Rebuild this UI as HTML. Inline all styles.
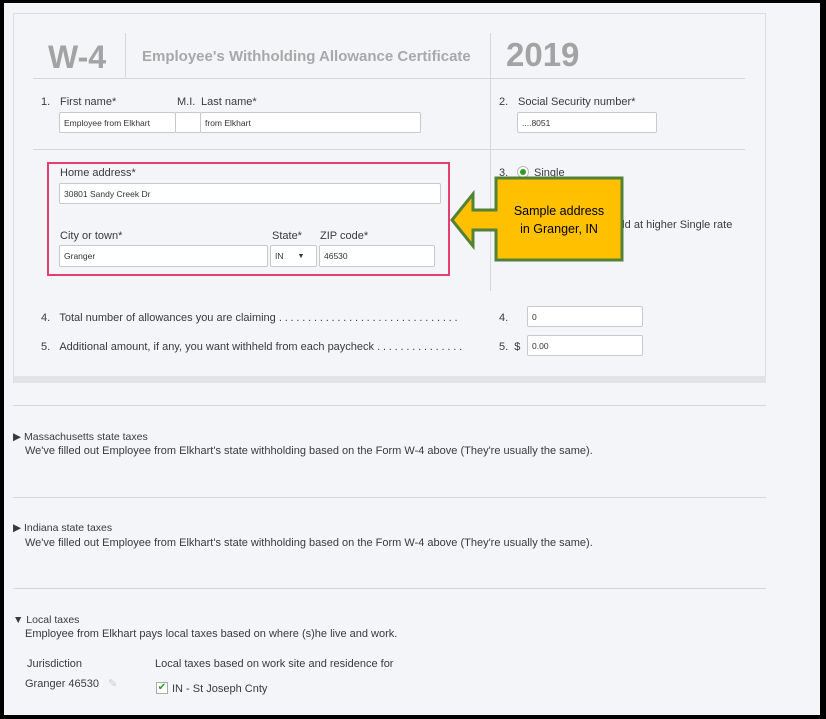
<!DOCTYPE html>
<html><head><style>
*{margin:0;padding:0;box-sizing:border-box}
body{width:826px;height:719px;background:#000;position:relative;overflow:hidden;font-family:"Liberation Sans",sans-serif;color:#333}
#pg{position:absolute;left:4px;top:3px;width:816px;height:712px;background:#f4f5f9}
.a{position:absolute;white-space:nowrap}
.t{font-size:11px;color:#393a3d}
.in{position:absolute;background:#fff;border:1px solid #c8c9cc;border-radius:2px;font-size:8.5px;padding:0 4px;display:flex;align-items:center;color:#333}
.hl{position:absolute;height:1px;background:#d6d7da}
.vl{position:absolute;width:1px;background:#d6d7da}
</style></head><body>
<div id="pg"></div>
<div class="a" style="left:13px;top:13px;width:753px;height:370px;border:1px solid #dcdde0;background:#f4f5f9"></div>
<div class="a" style="left:14px;top:376px;width:752px;height:7px;background:#e2e3e5"></div>
<div class="vl" style="left:125px;top:33px;height:45px"></div>
<div class="vl" style="left:490px;top:33px;height:258px"></div>
<div class="hl" style="left:33px;top:78px;width:712px"></div>
<div class="hl" style="left:33px;top:149px;width:712px"></div>
<div class="a" style="left:48px;top:39px;font-size:32px;font-weight:bold;color:#a3a3a3">W-4</div>
<div class="a" style="left:142px;top:48px;font-size:15px;font-weight:bold;color:#a8a8a8">Employee's Withholding Allowance Certificate</div>
<div class="a" style="left:506px;top:36px;font-size:33px;font-weight:bold;color:#a3a3a3">2019</div>

<div class="a t" style="left:41px;top:96px">1.</div>
<div class="a t" style="left:60px;top:96px">First name*</div>
<div class="a t" style="left:177px;top:96px">M.I.</div>
<div class="a t" style="left:201px;top:96px">Last name*</div>
<div class="in" style="left:59px;top:112px;width:117px;height:21px">Employee from Elkhart</div>
<div class="in" style="left:175px;top:112px;width:26px;height:21px"></div>
<div class="in" style="left:200px;top:112px;width:221px;height:21px">from Elkhart</div>

<div class="a t" style="left:499px;top:96px">2.</div>
<div class="a t" style="left:518px;top:96px">Social Security number*</div>
<div class="in" style="left:517px;top:112px;width:140px;height:21px">....8051</div>

<div class="a" style="left:47px;top:162px;width:403px;height:114px;border:2px solid #e63e6d"></div>
<div class="a t" style="left:60px;top:167px">Home address*</div>
<div class="in" style="left:59px;top:183px;width:382px;height:21px">30801 Sandy Creek Dr</div>
<div class="a t" style="left:60px;top:230px">City or town*</div>
<div class="a t" style="left:272px;top:230px">State*</div>
<div class="a t" style="left:320px;top:230px">ZIP code*</div>
<div class="in" style="left:59px;top:245px;width:209px;height:22px">Granger</div>
<div class="in" style="left:270px;top:245px;width:47px;height:22px">IN<span style="margin-left:14px;font-size:7px">▼</span></div>
<div class="in" style="left:319px;top:245px;width:116px;height:22px">46530</div>

<div class="a t" style="left:499px;top:167px">3.</div>
<div class="a" style="left:517px;top:166px;width:12px;height:12px;border-radius:50%;border:1px solid #bbb;background:#fff"><div style="position:absolute;left:2px;top:2px;width:6px;height:6px;border-radius:50%;background:#2ca01c"></div></div>
<div class="a t" style="left:534px;top:167px">Single</div>
<div class="a t" style="left:610px;top:219px">hold at higher Single rate</div>

<svg class="a" style="left:450px;top:176px" width="175" height="88" viewBox="0 0 175 88">
<path d="M46 2 H172 V84 H46 V54 H23 V70 L2 44 L23 18 V34 H46 Z" fill="#ffc000" stroke="#538135" stroke-width="3"/>
</svg>
<div class="a" style="left:496px;top:202px;width:126px;text-align:center;font-size:12.5px;line-height:18px;color:#000;white-space:normal">Sample address<br>in Granger, IN</div>

<div class="a t" style="left:41px;top:312px">4.&nbsp;&nbsp;&nbsp;Total number of allowances you are claiming <span style="letter-spacing:2.8px">...............................</span></div>
<div class="a t" style="left:41px;top:341px">5.&nbsp;&nbsp;&nbsp;Additional amount, if any, you want withheld from each paycheck <span style="letter-spacing:2.8px">...............</span></div>
<div class="a t" style="left:499px;top:312px">4.</div>
<div class="a t" style="left:499px;top:341px">5.&nbsp;&nbsp;$</div>
<div class="in" style="left:527px;top:306px;width:116px;height:21px">0</div>
<div class="in" style="left:527px;top:335px;width:116px;height:21px">0.00</div>

<div class="hl" style="left:13px;top:405px;width:753px"></div>
<div class="a" style="left:13px;top:431px;font-size:10.5px;color:#393a3d">▶ Massachusetts state taxes</div>
<div class="a t" style="left:25px;top:445px">We've filled out Employee from Elkhart's state withholding based on the Form W-4 above (They're usually the same).</div>
<div class="hl" style="left:13px;top:497px;width:753px"></div>
<div class="a" style="left:13px;top:522px;font-size:10.5px;color:#393a3d">▶ Indiana state taxes</div>
<div class="a t" style="left:25px;top:537px">We've filled out Employee from Elkhart's state withholding based on the Form W-4 above (They're usually the same).</div>
<div class="hl" style="left:13px;top:588px;width:753px"></div>
<div class="a" style="left:13px;top:614px;font-size:10.5px;color:#393a3d">▼ Local taxes</div>
<div class="a t" style="left:25px;top:628px">Employee from Elkhart pays local taxes based on where (s)he live and work.</div>
<div class="a t" style="left:27px;top:658px">Jurisdiction</div>
<div class="a t" style="left:25px;top:677px">Granger 46530 <span style="color:#ccc;margin-left:6px">✎</span></div>
<div class="a t" style="left:155px;top:658px">Local taxes based on work site and residence for</div>
<div class="a" style="left:156px;top:682px;width:12px;height:12px;border:1px solid #aaa;background:#fff;font-size:10px;line-height:10px;color:#2ca01c;text-align:center">✔</div>
<div class="a t" style="left:172px;top:683px">IN - St Joseph Cnty</div>
</body></html>
